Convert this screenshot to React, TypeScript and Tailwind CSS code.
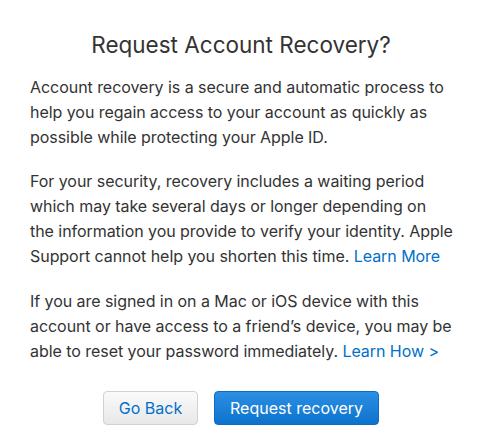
import React from "react";

const Link = ({ children }: { children: React.ReactNode }) => (
  <a href="#" className="text-[#0070c9] no-underline">
    {children}
  </a>
);

const App = () => {
  return (
    <div
      className="w-[482px] h-[447px] bg-white text-[#333333] pt-[32px] pl-[30px] pr-[20px]"
      style={{ fontFamily: "Inter, 'Liberation Sans', sans-serif" }}
    >
      <h1 className="text-[22.5px] leading-[26px] font-normal text-center pr-[10px]">
        Request Account Recovery?
      </h1>

      <div className="mt-[17px] text-[16px] leading-[25px] tracking-[-0.05px]">
        <p>
          Account recovery is a secure and automatic process to
          <br />
          help you regain access to your account as quickly as
          <br />
          possible while protecting your Apple ID.
        </p>

        <p className="mt-[19px]">
          For your security, recovery includes a waiting period
          <br />
          which may take several days or longer depending on
          <br />
          the information you provide to verify your identity. Apple
          <br />
          Support cannot help you shorten this time. <Link>Learn More</Link>
        </p>

        <p className="mt-[20px]">
          If you are signed in on a Mac or iOS device with this
          <br />
          account or have access to a friend’s device, you may be
          <br />
          able to reset your password immediately. <Link>Learn How &gt;</Link>
        </p>
      </div>

      <div className="mt-[27px] flex justify-center gap-4 pr-[10px]">
        <button className="w-[95px] h-[34px] rounded-[4px] border border-[#d2d2d2] bg-gradient-to-b from-[#fafafa] to-[#e8e8e8] text-[#0070c9] text-[16px]">
          Go Back
        </button>
        <button className="w-[165px] h-[34px] rounded-[4px] border border-[#0b6cc4] bg-gradient-to-b from-[#2a90e3] to-[#0b72cc] text-white text-[16px]">
          Request recovery
        </button>
      </div>
    </div>
  );
};

export default App;
